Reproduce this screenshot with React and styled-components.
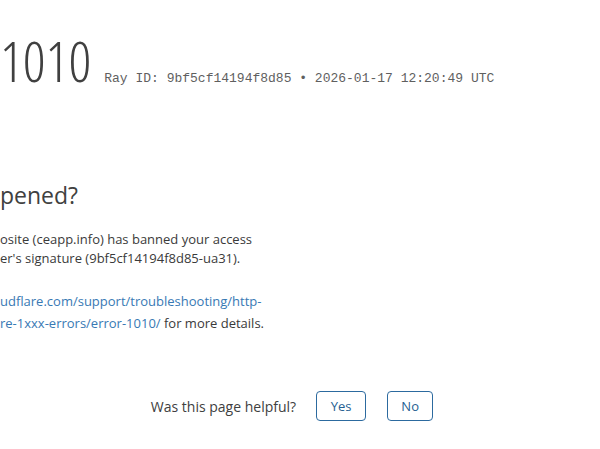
import React from "react";
import styled, { createGlobalStyle } from "styled-components";

// ---------------------------------------------------------------
// --- ERROR 1010 PAGE (view is scrolled, left part is cut off)
// ---------------------------------------------------------------

const GlobalStyle = createGlobalStyle`
  html, body {
    margin: 0;
    padding: 0;
    background: #ffffff;
    overflow: hidden;
  }
  body {
    width: 600px;
    height: 449px;
    font-family: "Open Sans", "Noto Sans", sans-serif;
    color: #404040;
  }
`;

const Page = styled.div`
  width: 600px;
  height: 449px;
  overflow: hidden;
  display: flex;
  flex-direction: column;
`;

// --The big header with the error code and ray id
const Overview = styled.header`
  display: flex;
  align-items: baseline;
  padding: 32px 0 0 0;
  white-space: nowrap;
`;

const ErrorTitle = styled.h1`
  margin: 0;
  font-size: 56px;
  font-weight: 300;
  font-stretch: 75%;
  line-height: 1;
  color: #404040;
`;

const RayId = styled.span`
  margin-left: 13px;
  font-family: "Liberation Mono", "Courier New", monospace;
  font-size: 13px;
  color: #5f5f5f;
`;

// --What happened section
const Details = styled.section`
  margin-top: 94px;
  white-space: nowrap;
`;

const Heading = styled.h2`
  margin: 0 0 20px;
  font-size: 23px;
  font-weight: 400;
  line-height: 1.2;
  color: #404040;
`;

const Text = styled.p`
  margin: 0 0 22px;
  font-size: 13px;
  line-height: ${(p) => p.lh}px;
  color: #3a3a3a;
`;

const Link = styled.a`
  color: #3879b4;
  text-decoration: none;
`;

// --Feedback row at the bottom
const Feedback = styled.footer`
  display: flex;
  align-items: center;
  justify-content: center;
  gap: 20px;
  margin-top: auto;
  margin-bottom: 28px;
  padding-right: 16px;
`;

const Question = styled.span`
  font-size: 14px;
  color: #404040;
`;

const Buttons = styled.div`
  display: flex;
  gap: 21px;
`;

const Button = styled.button`
  height: 30px;
  width: ${(p) => p.w}px;
  padding: 0;
  background: #fff;
  border: 1px solid #2c6a9f;
  border-radius: 4px;
  font-family: "Open Sans", "Noto Sans", sans-serif;
  font-size: 13px;
  color: #265f92;
`;

const App = () => {
  return (
    <Page>
      <GlobalStyle />
      <Overview>
        <ErrorTitle>1010</ErrorTitle>
        <RayId>Ray ID: 9bf5cf14194f8d85 • 2026-01-17 12:20:49 UTC</RayId>
      </Overview>

      <Details>
        <Heading>pened?</Heading>
        <Text lh={19}>
          osite (ceapp.info) has banned your access
          <br />
          er's signature (9bf5cf14194f8d85-ua31).
        </Text>
        <Text lh={22}>
          <Link href="#">
            udflare.com/support/troubleshooting/http-
            <br />
            re-1xxx-errors/error-1010/
          </Link>{" "}
          for more details.
        </Text>
      </Details>

      <Feedback>
        <Question>Was this page helpful?</Question>
        <Buttons>
          <Button w={50}>Yes</Button>
          <Button w={46}>No</Button>
        </Buttons>
      </Feedback>
    </Page>
  );
};

export default App;
